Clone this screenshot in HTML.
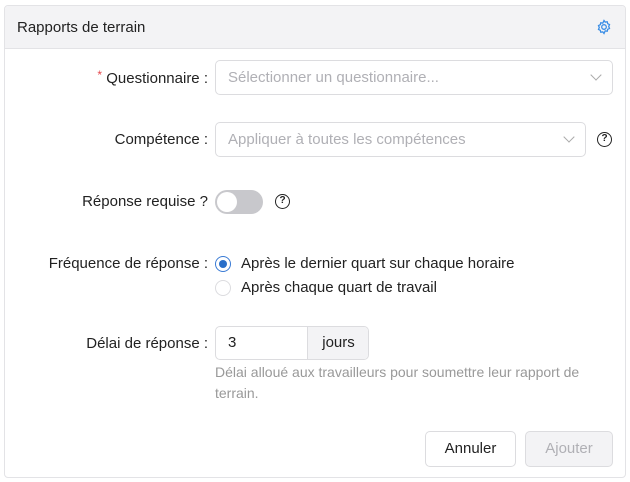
<!DOCTYPE html><html><head><meta charset="utf-8"><style>
*{box-sizing:border-box;margin:0;padding:0}
body{width:630px;height:482px;background:#fff;font-family:"Liberation Sans",sans-serif;color:#222;position:relative;overflow:hidden}
.card{position:absolute;left:4px;top:5px;width:622px;height:473px;border:1px solid #e3e3e6;border-radius:4px;overflow:hidden}
.hd{height:43px;background:#f3f3f5;border-bottom:1px solid #e3e3e6;font-size:15px;line-height:43px;padding-left:12px}
.a{position:absolute}
.lbl{position:absolute;right:422px;font-size:15px;white-space:nowrap}
.box{position:absolute;border:1px solid #dcdcdf;border-radius:5px;font-size:15px;color:#b0b0b5;padding-left:12px}
.chev{position:absolute;right:12px;top:10px;width:8px;height:8px;border-right:1px solid #aaa;border-bottom:1px solid #aaa;transform:rotate(45deg)}
.q{position:absolute;width:15px;height:15px;border:1.5px solid #222;border-radius:50%;font-size:10px;font-weight:bold;text-align:center;line-height:12px}
.btn{position:absolute;height:36px;border:1px solid #dcdcdf;border-radius:5px;font-size:15px;text-align:center;line-height:34px}
</style></head><body>
<div class="card"><div class="hd">Rapports de terrain</div></div>
<svg class="a" style="left:596px;top:19px" width="16" height="16" viewBox="0 0 16 16" fill="none" stroke="#3a8ee6" stroke-width="1.3"><path d="M8 1.5l1.2 1.6 2-.4.5 2 1.8.9-.8 1.9.8 1.9-1.8.9-.5 2-2-.4L8 14.5 6.8 12.9l-2 .4-.5-2-1.8-.9.8-1.9-.8-1.9 1.8-.9.5-2 2 .4z"/><circle cx="8" cy="8" r="2.3"/></svg>
<div class="lbl" style="top:68px"><span style="color:#e5484d;font-size:12px;vertical-align:4px">*</span> Questionnaire :</div>
<div class="box" style="left:215px;top:60px;width:398px;height:35px;line-height:33px">Sélectionner un questionnaire...<div class="chev"></div></div>
<div class="lbl" style="top:131px">Compétence :</div>
<div class="box" style="left:215px;top:122px;width:371px;height:35px;line-height:33px">Appliquer à toutes les compétences<div class="chev"></div></div>
<div class="q" style="left:597px;top:132px">?</div>
<div class="lbl" style="top:193px">Réponse requise ?</div>
<div class="a" style="left:215px;top:190px;width:48px;height:24px;border-radius:12px;background:#c8c8cc"><div style="position:absolute;left:2px;top:2px;width:20px;height:20px;border-radius:50%;background:#fff"></div></div>
<div class="q" style="left:275px;top:194px">?</div>
<div class="lbl" style="top:255px">Fréquence de réponse :</div>
<div class="a" style="left:215px;top:256px;width:16px;height:16px;border:1px solid #3a7bd5;border-radius:50%"><div style="position:absolute;left:3px;top:3px;width:8px;height:8px;border-radius:50%;background:#2a6fc9"></div></div>
<div class="a" style="left:241px;top:255px;font-size:15px">Après le dernier quart sur chaque horaire</div>
<div class="a" style="left:215px;top:280px;width:16px;height:16px;border:1px solid #dcdcdf;border-radius:50%"></div>
<div class="a" style="left:241px;top:279px;font-size:15px">Après chaque quart de travail</div>
<div class="lbl" style="top:335px">Délai de réponse :</div>
<div class="box" style="left:215px;top:326px;width:154px;height:34px;line-height:32px;color:#222;overflow:hidden">3<div style="position:absolute;left:91px;top:0;width:62px;height:32px;background:#f3f3f5;border-left:1px solid #dcdcdf;text-align:center">jours</div></div>
<div class="a" style="left:215px;top:362px;font-size:14px;color:#999;line-height:21px;width:400px">Délai alloué aux travailleurs pour soumettre leur rapport de terrain.</div>
<div class="btn" style="left:425px;top:431px;width:91px">Annuler</div>
<div class="btn" style="left:525px;top:431px;width:88px;background:#f3f3f5;color:#b0b0b5">Ajouter</div>
</body></html>
